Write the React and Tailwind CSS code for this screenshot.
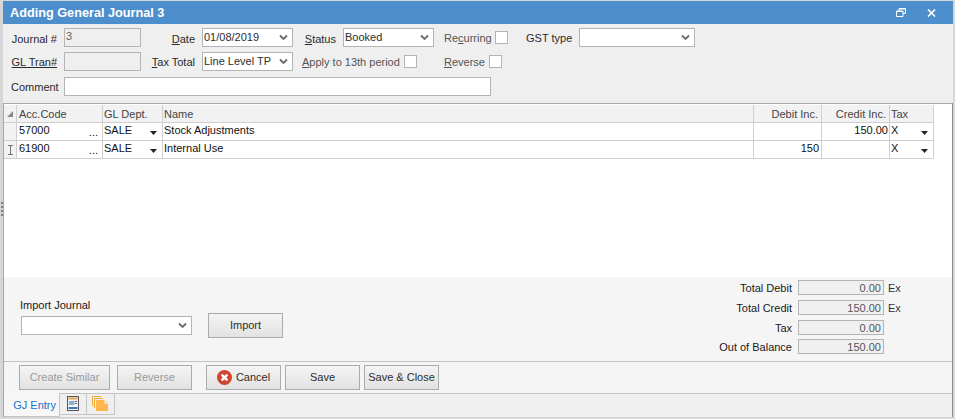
import React from "react";

function Chevron({ className = "" }) {
  return (
    <svg width="9" height="7" viewBox="0 0 9 7" className={className}>
      <path d="M1 1.5 L4.5 5 L8 1.5" fill="none" stroke="#6b6b6b" strokeWidth="1.8" />
    </svg>
  );
}

function Select({ w, value = "" }) {
  return (
    <div className={`${w} h-[19px] shrink-0 bg-white border border-[#b4b4b4] flex items-center justify-between pl-[1px] pr-[4px]`}>
      <span className="text-[#2e2e2e] whitespace-nowrap -mt-[1px]">{value}</span>
      <Chevron />
    </div>
  );
}

function Check() {
  return <div className="w-[13px] h-[13px] shrink-0 bg-white border border-[#b4b4b4]" />;
}

function Btn({ w, children, disabled }) {
  return (
    <div className={`${w} h-[25px] shrink-0 border border-[#ababab] bg-gradient-to-b from-[#f4f4f4] to-[#e2e2e2] flex items-center justify-center whitespace-nowrap pb-[2px] ${disabled ? "text-[#9a9a9a]" : "text-[#2e2e2e]"}`}>
      {children}
    </div>
  );
}

function Caret() {
  return (
    <svg width="7" height="4" viewBox="0 0 7 4" className="shrink-0 mt-[6px]">
      <path d="M0 0 H7 L3.5 4 Z" fill="#222222" />
    </svg>
  );
}

function Cell({ w, children, className = "" }) {
  return <div className={`${w} shrink-0 h-full border-r border-[#cfcfcf] flex items-center ${className}`}>{children}</div>;
}

function Row({ marker, code, name, debit, credit }) {
  const t = "pb-[3px]";
  return (
    <div className="flex h-[18px] border-b border-[#cfcfcf] w-[930px] text-[#111111]">
      <Cell w="w-[13px]" className="bg-[#f2f2f2] justify-center">
        {marker && (
          <svg width="5" height="10" viewBox="0 0 5 10">
            <path d="M0 .5H5M0 9.5H5M2.5 .5V9.5" stroke="#777777" strokeWidth="1" fill="none" />
          </svg>
        )}
      </Cell>
      <Cell w="w-[86px]" className={`justify-between pl-[2px] pr-[4px] ${t}`}>
        <span>{code}</span><span className="mt-[3px]">...</span>
      </Cell>
      <Cell w="w-[60px]" className={`justify-between pl-[1px] pr-[5px] ${t}`}>
        <span>SALE</span><Caret />
      </Cell>
      <Cell w="w-[591px]" className={`pl-[1px] ${t}`}>{name}</Cell>
      <Cell w="w-[68px]" className={`justify-end pr-[2px] ${t}`}>{debit}</Cell>
      <Cell w="w-[68px]" className={`justify-end pr-[1px] ${t}`}>{credit}</Cell>
      <Cell w="w-[44px]" className={`justify-between pl-[1px] pr-[5px] ${t}`}>
        <span>X</span><Caret />
      </Cell>
    </div>
  );
}

function Total({ label, value, ex, className = "" }) {
  return (
    <div className={`flex items-center h-[15px] ${className}`}>
      <div className="w-[140px] text-right text-[#1a1a1a]">{label}</div>
      <div className="w-[86px] h-[15px] ml-[6px] bg-[#f0f0f0] border border-[#b4b4b4] flex items-center justify-end pr-[2px] pt-[1px] text-[#555555]">{value}</div>
      <div className="ml-[4px] w-[14px] text-[#333333] pt-[1px]">{ex && "Ex"}</div>
    </div>
  );
}

const L = ({ children }) => <span className="underline underline-offset-1">{children}</span>;

export default function App() {
  return (
    <div className="relative w-[955px] h-[419px] bg-[#d6d6d6] pt-[1px] pl-[3px] pr-[2px] pb-[2px] flex flex-col overflow-hidden text-[11px] leading-[14px] font-['Liberation_Sans',sans-serif] text-[#2a2a2a]">
      <div className="absolute left-[1px] top-[202px] flex flex-col gap-[2px]">
        <div className="w-[2px] h-[2px] bg-[#7f7f7f]" />
        <div className="w-[2px] h-[2px] bg-[#7f7f7f]" />
        <div className="w-[2px] h-[2px] bg-[#7f7f7f]" />
        <div className="w-[2px] h-[2px] bg-[#7f7f7f]" />
      </div>
      <div className="h-[23px] shrink-0 bg-[#4d8ecd] flex items-center justify-between pl-[7px] pr-[17px] text-white">
        <span className="text-[12.7px] font-bold">Adding General Journal 3</span>
        <div className="flex items-center gap-[21px]">
          <svg width="10" height="9" viewBox="0 0 10 9">
            <path d="M3 2.5V.5H9.5V5.5H7M.5 3H7V8.5H.5Z" fill="none" stroke="#ffffff" strokeWidth="1" />
            <path d="M.5 3.5H7M3 1H9.5" stroke="#ffffff" strokeWidth="1" />
          </svg>
          <svg width="9" height="8" viewBox="0 0 9 8">
            <path d="M1 .5L8 7.5M8 .5L1 7.5" stroke="#ffffff" strokeWidth="1.6" />
          </svg>
        </div>
      </div>

      <div className="h-[79px] shrink-0 bg-[#efefef] pt-[4px] pl-[8px] flex flex-col whitespace-nowrap">
        <div className="flex items-center h-[19px]">
          <div className="w-[46px] text-right mt-[3px]">Journal #</div>
          <div className="w-[77px] h-[19px] ml-[7px] bg-[#efefef] border border-[#b4b4b4] pl-[1px] text-[#666666]">3</div>
          <div className="w-[54px] text-right mt-[3px]"><L>D</L>ate</div>
          <div className="ml-[7px]"><Select w="w-[91px]" value="01/08/2019" /></div>
          <div className="w-[43px] text-right mt-[3px]"><L>S</L>tatus</div>
          <div className="ml-[7px]"><Select w="w-[91px]" value="Booked" /></div>
          <div className="ml-[10px] w-[46px] text-[#555555]">Re<L>c</L>urring</div>
          <div className="ml-[5px]"><Check /></div>
          <div className="ml-[18px] w-[44px]">GST type</div>
          <div className="ml-[9px]"><Select w="w-[116px]" /></div>
        </div>
        <div className="flex items-center h-[19px] mt-[5px]">
          <div className="w-[46px] text-right"><L>GL Tran#</L></div>
          <div className="w-[77px] h-[19px] ml-[7px] bg-[#efefef] border border-[#b4b4b4]" />
          <div className="w-[54px] text-right"><L>T</L>ax Total</div>
          <div className="ml-[7px]"><Select w="w-[91px]" value="Line Level TP" /></div>
          <div className="ml-[9px] w-[97px] text-[#555555]"><L>A</L>pply to 13th period</div>
          <div className="ml-[5px]"><Check /></div>
          <div className="ml-[27px] w-[40px] text-[#555555]"><L>R</L>everse</div>
          <div className="ml-[5px]"><Check /></div>
        </div>
        <div className="flex items-center h-[19px] mt-[6px]">
          <div className="w-[46px] text-right">Comment</div>
          <div className="w-[427px] h-[19px] ml-[7px] bg-white border border-[#b4b4b4]" />
        </div>
      </div>

      <div className="flex-1 min-h-0 flex flex-col border-l border-[#a8a8a8] border-r border-r-[#8c8c8c] bg-white">
        <div className="h-[174px] shrink-0 bg-white border-t border-[#a8a8a8]">
          <div className="flex h-[18px] w-[930px] mt-[1px] border-b border-[#cfcfcf] bg-[#f2f2f2] text-[#444444]">
            <Cell w="w-[13px]" className="justify-center">
              <svg width="6" height="6" viewBox="0 0 6 6"><path d="M6 0V6H0Z" fill="#8a8a8a" /></svg>
            </Cell>
            <Cell w="w-[86px]" className="pl-[2px]">Acc.Code</Cell>
            <Cell w="w-[60px]" className="pl-[1px]">GL Dept.</Cell>
            <Cell w="w-[591px]" className="pl-[1px]">Name</Cell>
            <Cell w="w-[68px]" className="justify-end pr-[3px]">Debit Inc.</Cell>
            <Cell w="w-[68px]" className="justify-end pr-[3px]">Credit Inc.</Cell>
            <Cell w="w-[44px]" className="pl-[1px]">Tax</Cell>
          </div>
          <Row code="57000" name="Stock Adjustments" credit="150.00" />
          <Row marker code="61900" name="Internal Use" debit="150" />
        </div>

        <div className="h-[85px] shrink-0 bg-[#f5f5f5] flex justify-between border-b border-[#c4c4c4]">
          <div className="flex items-start pl-[16px]">
            <div className="pt-[21px]">
              <div className="h-[14px] text-[#1a1a1a] whitespace-nowrap">Import Journal</div>
              <div className="ml-[1px] mt-[4px]"><Select w="w-[171px]" /></div>
            </div>
            <div className="ml-[16px] mt-[36px]"><Btn w="w-[75px]">Import</Btn></div>
          </div>
          <div className="shrink-0 pt-[3px] flex flex-col mr-[50px] whitespace-nowrap">
            <Total label="Total Debit" value="0.00" ex />
            <Total label="Total Credit" value="150.00" ex className="mt-[5px]" />
            <Total label="Tax" value="0.00" className="mt-[5px]" />
            <Total label="Out of Balance" value="150.00" className="mt-[4px]" />
          </div>
        </div>

        <div className="h-[32px] shrink-0 bg-[#f5f5f5] flex items-center pl-[15px] border-b border-[#c4c4c4]">
          <Btn w="w-[91px]" disabled>Create Similar</Btn>
          <div className="ml-[7px]"><Btn w="w-[75px]" disabled>Reverse</Btn></div>
          <div className="ml-[14px]">
            <Btn w="w-[75px]">
              <svg width="15" height="15" viewBox="0 0 15 15" className="mr-[4px] mt-[2px]">
                <circle cx="7.5" cy="7.5" r="7.5" fill="#cf4331" />
                <path d="M4.6 4.6L10.4 10.4M10.4 4.6L4.6 10.4" stroke="#ffffff" strokeWidth="2.4" />
              </svg>
              Cancel
            </Btn>
          </div>
          <div className="ml-[4px]"><Btn w="w-[75px]">Save</Btn></div>
          <div className="ml-[4px]"><Btn w="w-[75px]">Save &amp; Close</Btn></div>
        </div>

        <div className="flex-1 min-h-0 bg-[#efefef] flex items-start">
          <div className="w-[56px] h-[24px] bg-[#f7f7f7] border-r border-b border-[#c4c4c4] flex items-center justify-end pr-[3px] text-[#1a73c9] -mt-[1px] whitespace-nowrap">GJ Entry</div>
          <div className="w-[27px] h-[22px] border-r border-b border-[#c4c4c4] flex items-center justify-center -mt-[1px]">
            <svg width="12" height="15" viewBox="0 0 12 15">
              <rect x=".5" y=".5" width="11" height="14" fill="#f4f4f4" stroke="#555555" />
              <rect x="1.5" y="1.5" width="9" height="2" fill="#e8a24a" />
              <rect x="2" y="5" width="5" height="4" fill="#7db4de" />
              <path d="M7.5 5.5H10M7.5 7.5H10" stroke="#666666" />
              <rect x="1.5" y="11" width="9" height="2" fill="#3a78b8" />
            </svg>
          </div>
          <div className="w-[28px] h-[22px] border-r border-b border-[#c4c4c4] flex items-center justify-center -mt-[1px]">
            <svg width="17" height="15" viewBox="0 0 17 15">
              <path d="M.5 10V.5H9" fill="none" stroke="#f2a93b" />
              <path d="M2.5 12V2.5H11" fill="none" stroke="#f2a93b" />
              <path d="M4 4H12L16 8V15H4Z" fill="#fdb74e" />
              <path d="M12 4V8H16" fill="#f9dca8" />
            </svg>
          </div>
        </div>
      </div>
    </div>
  );
}
